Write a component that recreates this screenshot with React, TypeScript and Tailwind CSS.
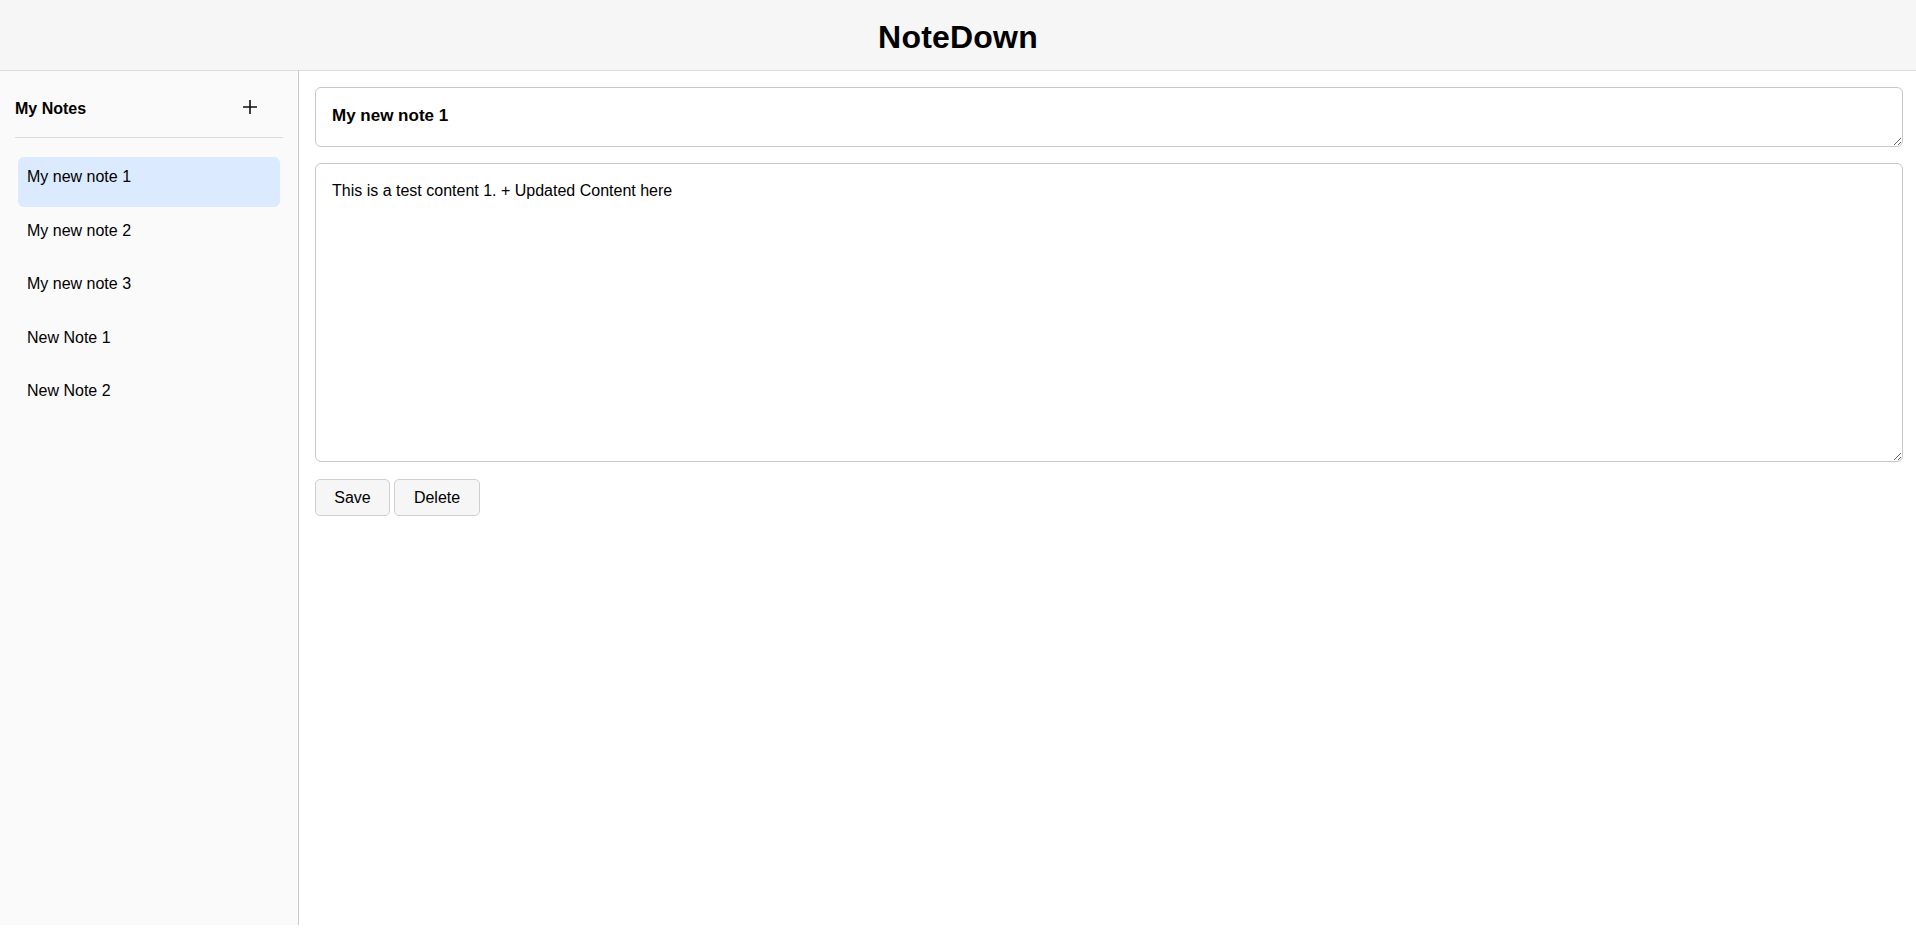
import { useState } from "react";

const notes = [
  { id: 1, title: "My new note 1", content: "This is a test content 1. + Updated Content here" },
  { id: 2, title: "My new note 2", content: "" },
  { id: 3, title: "My new note 3", content: "" },
  { id: 4, title: "New Note 1", content: "" },
  { id: 5, title: "New Note 2", content: "" },
];

export default function App() {
  const [active, setActive] = useState(1);
  const note = notes.find((n) => n.id === active)!;

  return (
    <div
      className="h-[925px] flex flex-col bg-white text-black"
      style={{ fontFamily: '"Liberation Sans", Arial, sans-serif' }}
    >
      <header className="h-[71px] shrink-0 bg-[#f6f6f6] border-b border-[#dcdcdc] flex items-center justify-center">
        <h1 className="text-[32px] font-bold tracking-[0.2px] leading-none mt-[3px]">NoteDown</h1>
      </header>

      <div className="flex flex-1 min-h-0">
        <aside className="w-[299px] shrink-0 bg-[#fafafa] border-r border-[#c8c8c8] px-[15px]">
          <div className="flex items-center justify-between h-[67px] border-b border-[#dcdcdc] pt-[10px]">
            <span className="text-[16px] font-bold">My Notes</span>
            <button className="w-[30px] h-[30px] mr-[18px] mb-[5px] flex items-center justify-center">
              <svg width="16" height="16" viewBox="0 0 16 16" fill="none" stroke="#111" strokeWidth="1.6">
                <path d="M8 1v14M1 8h14" />
              </svg>
            </button>
          </div>
          <ul className="mt-[19px] flex flex-col gap-[3.5px] px-[3px]">
            {notes.map((n) => (
              <li
                key={n.id}
                onClick={() => setActive(n.id)}
                className={
                  "h-[50px] rounded-md px-[9px] pt-[9px] text-[16px] leading-[22px] cursor-pointer " +
                  (n.id === active ? "bg-[#dbeafe]" : "")
                }
              >
                {n.title}
              </li>
            ))}
          </ul>
        </aside>

        <main className="flex-1 pl-[16px] pr-[13px] pt-[16px]">
          <textarea
            className="block w-full h-[60px] border border-[#c8c8c8] rounded-md px-4 pt-[16px] text-[17px] font-bold leading-[24px] outline-none"
            defaultValue={note.title}
          />
          <textarea
            className="block w-full h-[299px] mt-[16px] border border-[#c8c8c8] rounded-md px-4 pt-[16px] text-[16px] leading-[22px] outline-none"
            defaultValue={note.content}
          />
          <div className="flex gap-[4px] mt-[17px]">
            <button className="h-[37px] w-[75px] bg-[#f6f6f6] border border-[#cfcfcf] rounded-[5px] text-[16px]">
              Save
            </button>
            <button className="h-[37px] w-[86px] bg-[#f6f6f6] border border-[#cfcfcf] rounded-[5px] text-[16px]">
              Delete
            </button>
          </div>
        </main>
      </div>
    </div>
  );
}
